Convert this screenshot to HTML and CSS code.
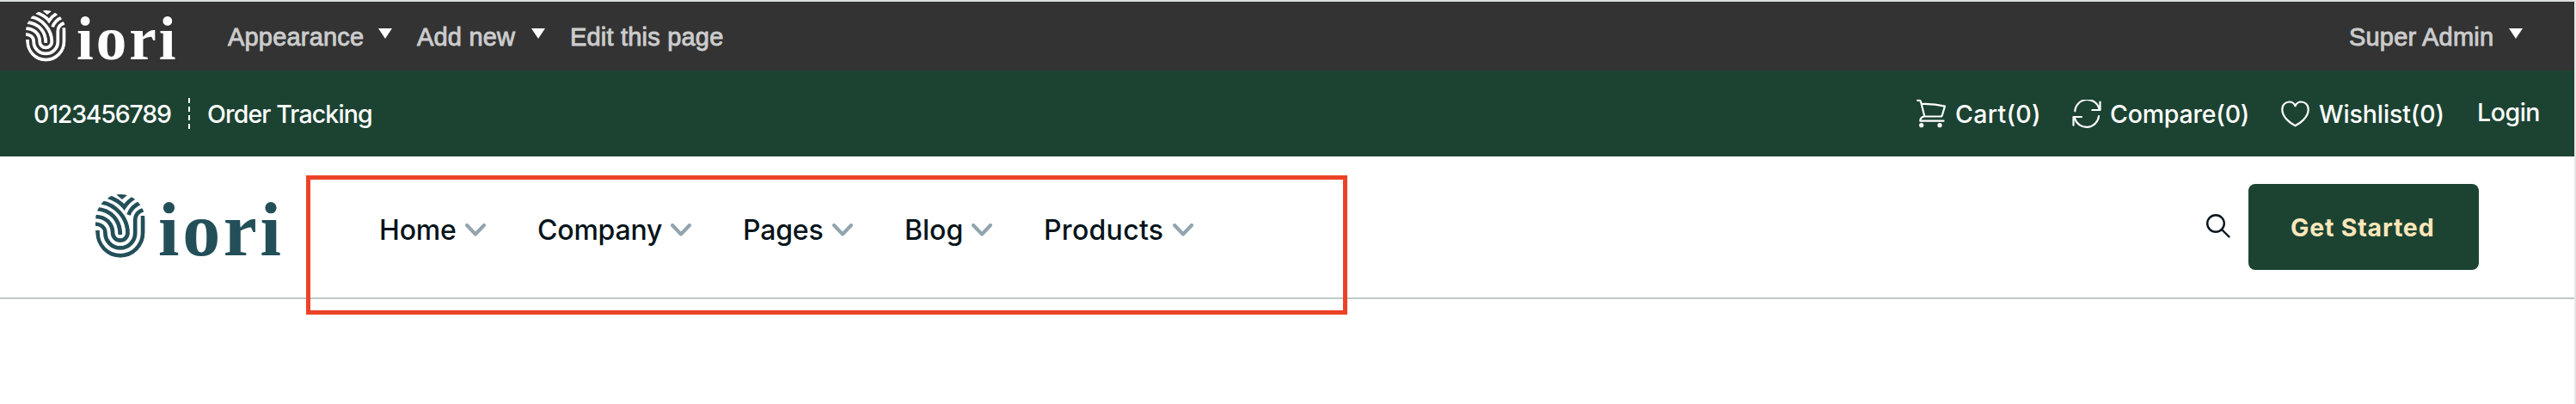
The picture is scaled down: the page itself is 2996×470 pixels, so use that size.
FILE: index.html
```html
<!DOCTYPE html>
<html lang="en">
<head>
<meta charset="utf-8">
<title>iori</title>
<link rel="stylesheet" href="styles.css">
</head>
<body>
<svg class="defs" aria-hidden="true">
  <defs>
    <clipPath id="print-clip"><rect width="58" height="74" rx="29" ry="31"/></clipPath>
    <symbol id="logo" viewBox="0 0 218 76">
      <g clip-path="url(#print-clip)" fill="none" stroke="currentColor" stroke-width="4.7">
        <path d="M26 -1L31 3L36 -1"/>
        <path d="M15 3Q27 7 33.5 15Q38 8 45 4"/>
        <path d="M7 9.5C24 12 37.5 28 37.5 45a8.7 8.7 0 0 1-17.4 0C20 34 12 26 0 26"/>
        <path d="M1 17C18 18 28.8 30 28.8 47"/>
        <path d="M0 34.5C7 35 11.4 39 11.4 45a17.4 17.4 0 0 0 34.8 0V30Q46.200 21 56 18"/>
        <path d="M2.500 42V45a26.300 26.300 0 0 0 52.600 0V25"/>
        <path d="M38.500 24Q42 14 52 10"/>
      </g>
      <text class="wordmark" x="73" y="70.500" textLength="143">iori</text>
    </symbol>
    <symbol id="chevron" viewBox="0 0 24 15"><path d="M2 2L12 12.500L22 2" fill="none" stroke="currentColor" stroke-width="4" stroke-linecap="round" stroke-linejoin="round"/></symbol>
  </defs>
</svg>

<div class="admin-bar">
  <svg class="admin-logo"><use href="#logo"/></svg>
  <a class="admin-link appearance">Appearance</a><i class="caret"></i>
  <a class="admin-link add-new">Add new</a><i class="caret"></i>
  <a class="admin-link edit-page">Edit this page</a>
  <a class="admin-link admin-user">Super Admin</a><i class="caret"></i>
</div>

<div class="top-bar">
  <a class="top-link phone">0123456789</a>
  <i class="divider"></i>
  <a class="top-link tracking">Order Tracking</a>
  <svg class="icon cart-icon" viewBox="0 0 34 34"><path d="M1.200 1.900H3Q4.600 1.900 5.100 3.500L9.300 20.500H28.600Q29.300 20.500 29.600 19.700L33 8.600Q20 5.500 6 6M9.300 20.500Q4.300 21 4.300 25.700H31.500"/><circle cx="5.700" cy="30.700" r="2.600"/><circle cx="27" cy="30.700" r="2.600"/></svg>
  <a class="top-link cart">Cart(0)</a>
  <svg class="icon compare-icon" viewBox="0 0 34 34"><path d="M3.300 13.300A14.300 14.300 0 0 1 31.500 11M32.500 2.500V12H23.300M31 19A14.300 14.300 0 0 1 3 21.500M1.500 29.700V20H11"/></svg>
  <a class="top-link compare">Compare(0)</a>
  <svg class="icon heart-icon" viewBox="0 0 34 34"><path d="M16.500 29.300C12 27 1.300 20 1.300 10.500C1.300 4.500 5.500 1.500 9.500 1.500C12.500 1.500 15.300 3.200 16.500 6.300C17.700 3.200 20.500 1.500 23.500 1.500C27.500 1.500 31.700 4.500 31.700 10.500C31.700 20 21 27 16.500 29.300Z"/></svg>
  <a class="top-link wishlist">Wishlist(0)</a>
  <a class="top-link login">Login</a>
</div>

<header class="header">
  <svg class="site-logo"><use href="#logo"/></svg>
  <nav class="nav">
    <a class="nav-link home">Home</a><svg class="chevron"><use href="#chevron"/></svg>
    <a class="nav-link company">Company</a><svg class="chevron"><use href="#chevron"/></svg>
    <a class="nav-link pages">Pages</a><svg class="chevron"><use href="#chevron"/></svg>
    <a class="nav-link blog">Blog</a><svg class="chevron"><use href="#chevron"/></svg>
    <a class="nav-link products">Products</a><svg class="chevron"><use href="#chevron"/></svg>
  </nav>
  <svg class="search" viewBox="0 0 28 28"><circle cx="11" cy="11" r="9.800"/><path d="M18 18L26.500 26.500"/></svg>
  <a class="button">Get Started</a>
</header>
<div class="highlight"></div>
<div class="page-edge"></div>
</body>
</html>
```
FILE: styles.css
```css
* { box-sizing: border-box; }
body {
  margin: 0;
  background: #fff;
  font-family: Inter, "Liberation Sans", sans-serif;
  border-top: 2px solid #dcdedf;
}
.defs { position: absolute; width: 0; height: 0; }
svg { flex: none; display: block; }
a { flex: none; white-space: nowrap; }

.wordmark { font: bold 88px "Liberation Serif", serif; fill: currentColor; }

.admin-bar {
  display: flex;
  height: 80px;
  padding: 0 62px 0 30px;
  background: #333;
}
.admin-logo { width: 176px; height: 61.5px; margin-top: 9.500px; color: #fff; }
.admin-link {
  font: 29px/32px "Liberation Sans", Arial, sans-serif;
  letter-spacing: 0.2px;
  color: #ccc;
  -webkit-text-stroke: 0.9px #ccc;
  margin-top: 25px;
}
.caret {
  flex: none;
  width: 16px;
  height: 12px;
  margin-top: 31px;
  background: #fff;
  clip-path: polygon(0 0, 100% 0, 50% 100%);
}
.appearance { width: 175px; margin-left: 59px; }
.add-new { width: 133px; margin-left: 29px; }
.edit-page { margin-left: 29px; }
.admin-user { width: 186px; margin-left: auto; }

.top-bar {
  display: flex;
  height: 100px;
  padding: 0 41px 0 39px;
  background: #1c4332;
  color: #fff;
}
.top-link { font-size: 28.5px; line-height: 36px; font-weight: 500; margin-top: 33px; letter-spacing: -0.2px; }
.phone { width: 180px; letter-spacing: -1.200px; }
.divider {
  width: 2px;
  height: 36px;
  margin-top: 32px;
  background: repeating-linear-gradient(#fff 0 6px, transparent 6px 10px);
}
.tracking { margin-left: 20px; letter-spacing: -0.850px; }
.icon { width: 34px; height: 34px; margin-top: 33px; fill: none; stroke: #fff; stroke-width: 2.2; stroke-linecap: round; stroke-linejoin: round; }
.icon circle { fill: #fff; stroke: none; }
.cart-icon { margin-left: auto; }
.cart { width: 136px; margin-left: 11px; letter-spacing: 0.300px; }
.compare-icon { margin-top: 34px; }
.compare { width: 199px; margin-left: 10px; }
.heart-icon { margin-top: 35px; }
.wishlist { width: 184px; margin-left: 10px; letter-spacing: -0.100px; }
.login { width: 74px; margin-top: 31px; letter-spacing: -0.450px; }

.header {
  display: flex;
  height: 166px;
  padding: 0 113px 0 111px;
  border-bottom: 2px solid #bdc9cd;
  color: #06141a;
}
.site-logo { width: 218px; height: 76px; margin-top: 44px; color: #234f59; }
.nav { display: flex; margin-left: 112px; }
.nav-link { font-size: 32px; line-height: 40px; font-weight: 450; margin-top: 66px; letter-spacing: -0.200px; }
.chevron { width: 24px; height: 15px; margin: 78px 60px 0 0; color: #92a4ad; }
.home { width: 100px; }
.company { width: 155px; }
.pages { width: 104px; }
.blog { width: 78px; letter-spacing: 0; }
.products { width: 150px; letter-spacing: 0.300px; }
.search { width: 28px; height: 28px; margin: 67px 21px 0 auto; fill: none; stroke: #06141a; stroke-width: 2.4; stroke-linecap: round; }
.button {
  width: 268px;
  height: 100px;
  margin-top: 32px;
  padding: 33px 0 0 49px;
  border-radius: 8px;
  background: #1c4332;
  color: #ffe7bb;
  font-size: 28.5px;
  line-height: 36px;
  font-weight: 700;
  letter-spacing: 0.800px;
}

.highlight {
  position: absolute;
  left: 356px;
  top: 204px;
  width: 1211px;
  height: 162px;
  border: 5px solid #ec4227;
}
.page-edge {
  position: absolute;
  top: 2px;
  right: 0;
  width: 2px;
  height: 468px;
  background: #e4e5e6;
}
```
